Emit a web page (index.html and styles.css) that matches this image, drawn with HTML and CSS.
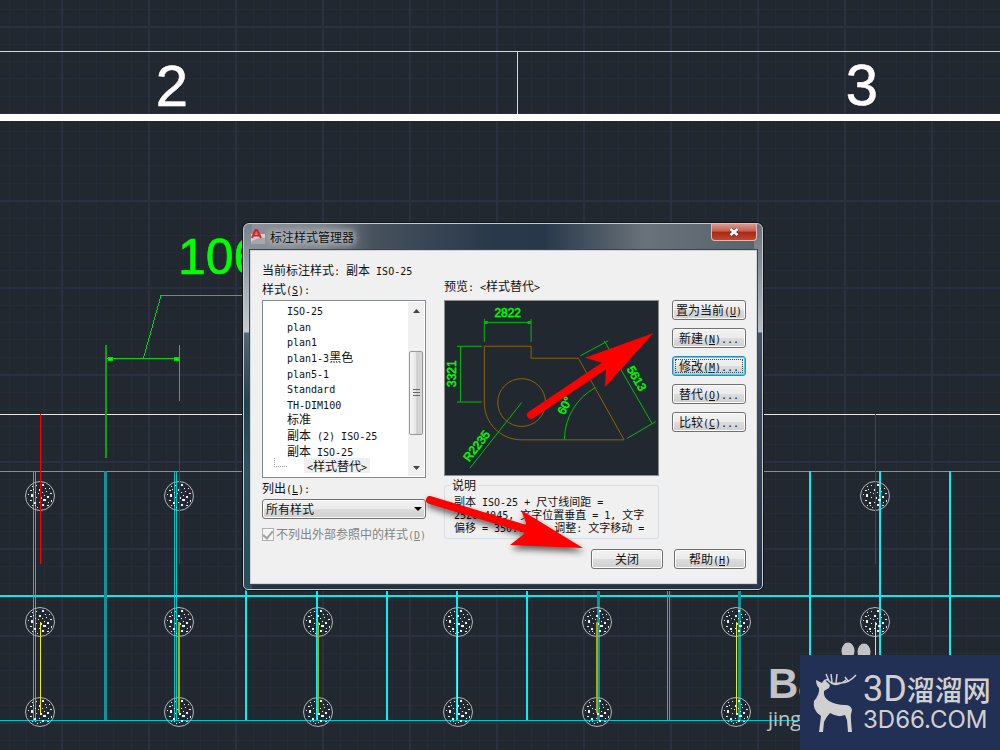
FILE: index.html
```html
<!DOCTYPE html>
<html lang="zh-CN">
<head>
<meta charset="utf-8">
<title>标注样式管理器</title>
<link rel="stylesheet" href="styles.css">
</head>
<body>
<main class="scene">
  <svg class="drawing" aria-hidden="true">
    <defs>
      <pattern id="grid" x="61" y="26" width="87" height="87" patternUnits="userSpaceOnUse">
        <path class="minor" d="M18 0V87M35 0V87M52 0V87M70 0V87M0 18H87M0 35H87M0 52H87M0 70H87"/>
        <path class="major" d="M0 1H87M1 0V87"/>
      </pattern>
      <g id="pile">
        <circle class="pile-edge" r="14.500"/>
        <path class="speck" d="M-10-6h2v1h-2zM-8-10h1v1h-1zM-4-11h1v1h-1zM2-12h2v2h-2zM5-8h1v1h-1zM9-8h1v1h-1zM-12-2h1v1h-1zM-9-2h2v3h-2zM-5-4h1v1h-1zM-1-7h2v2h-2zM2-4h1v1h-1zM6-5h1v1h-1zM10-3h2v1h-2zM-10 4h2v1h-2zM-6 6h2v2h-2zM-4 1h1v1h-1zM0 1h2v2h-2zM3 3h3v2h-3zM7 0h2v2h-2zM11 4h1v2h-1zM-1 6h1v1h-1zM2 8h2v2h-2zM7 9h2v1h-2zM-3 11h1v1h-1zM-8 9h1v1h-1zM-2-3h1v1h-1zM4-1h1v1h-1zM-7-7h1v1h-1zM8 6h1v1h-1zM-5 9h1v1h-1zM0 10h1v1h-1z"/>
      </g>
    </defs>
    <rect width="100%" height="100%" fill="url(#grid)"/>
    <g fill="#fff">
      <rect y="51" width="100%" height="1" fill="#d5d8dc"/>
      <rect x="517" y="52" width="1" height="62" fill="#d5d8dc"/>
      <rect y="114" width="100%" height="7"/>
      <rect y="414" width="100%" height="1" fill="#e8e8e8"/>
    </g>
    <text class="axis" x="172" y="106">2</text>
    <text class="axis" x="862" y="105">3</text>
    <g fill="#00c9cd">
      <rect y="471" width="100%" height="1"/>
      <rect y="720" width="100%" height="1"/>
    </g>
    <rect y="595" width="100%" height="2" fill="#00eef2"/>
    <path class="beam-pair" d="M33.500 471V720M35.500 471V720M174.500 471V720M176.500 471V720M667.500 590V720M669.500 590V720"/>
    <path class="beam-dull" d="M105 471V720M598 590V720M739 590V720"/>
    <path class="beam" d="M246 590V720M317 590V720M387 590V720M457 590V720M527 590V720M810 471V720M880 471V720M950 471V720"/>
    <g>
      <use href="#pile" x="40" y="496"/><use href="#pile" x="179" y="496"/><use href="#pile" x="875" y="496"/>
      <use href="#pile" x="40" y="622"/><use href="#pile" x="179" y="622"/><use href="#pile" x="318" y="622"/><use href="#pile" x="458" y="622"/><use href="#pile" x="597" y="622"/><use href="#pile" x="736" y="622"/><use href="#pile" x="875" y="622"/>
      <use href="#pile" x="40" y="712"/><use href="#pile" x="179" y="712"/><use href="#pile" x="318" y="712"/><use href="#pile" x="458" y="712"/><use href="#pile" x="597" y="712"/><use href="#pile" x="736" y="712"/>
    </g>
    <rect class="red" x="40" y="414" width="1" height="150"/>
    <rect class="red dim" x="179" y="415" width="1" height="149"/>
    <rect class="red dim" x="875" y="414" width="1" height="150"/>
    <g class="yellow">
      <rect x="40" y="622" width="1" height="91"/><rect x="457" y="622" width="1" height="91"/>
      <rect x="736" y="622" width="1" height="91"/><rect x="875" y="622" width="1" height="91"/>
    </g>
    <path class="yellow-dim" d="M179 622V713M318 622V713M597 622V713"/>
    <g class="leader">
      <path d="M244 295.500H161L143.500 358M106 358.500H179"/>
      <path class="leader-ext" d="M106 345V458"/>
      <path d="M179.500 345V401"/>
      <path d="M108 357h4v3h-4zM174 357h4v3h-4z" fill="#0f0"/>
    </g>
    <text class="length" x="178" y="274">106</text>
  </svg>

  <aside class="watermark">
    <svg viewBox="0 0 40 18" aria-hidden="true"><ellipse cx="10" cy="9" rx="6.500" ry="8.500"/><ellipse cx="26" cy="10" rx="6.500" ry="8.500"/></svg>
    <strong>Ba</strong>
    <span>jing</span>
  </aside>

  <section class="dialog" role="dialog" aria-labelledby="dialog-title">
    <header class="titlebar">
      <svg class="app-icon" viewBox="0 0 16 16" aria-hidden="true">
        <path d="M1 5h14v10H1z" fill="#d2d2d4"/><path d="M1 13q6-5 14-4v6H1z" fill="#a6a7ab"/>
        <path d="M2 9L5.500 1h1.500L11 9M4 6.500h5" fill="none" stroke="#e31b23" stroke-width="2"/>
      </svg>
      <h1 id="dialog-title">标注样式管理器</h1>
      <button class="close" type="button" aria-label="关闭窗口">
        <svg viewBox="0 0 12 10" aria-hidden="true"><path d="M2.500 2L9.500 8M9.500 2L2.500 8" stroke="#534444" stroke-width="4"/><path d="M2.500 2L9.500 8M9.500 2L2.500 8" stroke="#fff" stroke-width="2.500"/></svg>
      </button>
    </header>
    <form class="client">
      <p class="current">当前标注样式<span class="en">: </span>副本<span class="en"> ISO-25</span></p>
      <div class="columns">
        <div class="styles">
          <span class="caption" id="styles-label">样式<span class="en">(<u>S</u>):</span></span>
          <div class="listbox">
            <ul role="listbox" aria-labelledby="styles-label">
              <li role="option"><span class="en">ISO-25</span></li>
              <li role="option"><span class="en">plan</span></li>
              <li role="option"><span class="en">plan1</span></li>
              <li role="option"><span class="en">plan1-3</span>黑色</li>
              <li role="option"><span class="en">plan5-1</span></li>
              <li role="option"><span class="en">Standard</span></li>
              <li role="option"><span class="en">TH-DIM100</span></li>
              <li role="option">标准</li>
              <li role="option">副本<span class="en"> (2) ISO-25</span></li>
              <li role="option">副本<span class="en"> ISO-25</span></li>
              <li role="option" class="child" aria-selected="true"><span class="picked"><span class="en">&lt;</span>样式替代<span class="en">&gt;</span></span></li>
            </ul>
            <div class="scrollbar">
              <button type="button" aria-label="向上"><svg viewBox="0 0 7 4"><path d="M0 4L3.500 0 7 4z"/></svg></button>
              <div class="track"><div class="thumb"><i></i></div></div>
              <button type="button" aria-label="向下"><svg viewBox="0 0 7 4"><path d="M0 0L3.500 4 7 0z"/></svg></button>
            </div>
          </div>
          <label class="caption" for="filter">列出<span class="en">(<u>L</u>):</span></label>
          <div class="combo">
            <select id="filter"><option>所有样式</option></select>
            <svg viewBox="0 0 8 4" aria-hidden="true"><path d="M0 0h8L4 4z"/></svg>
          </div>
          <label class="check"><input type="checkbox" checked disabled><span>不列出外部参照中的样式<span class="en">(<u>D</u>)</span></span></label>
        </div>

        <div class="preview">
          <span class="caption">预览<span class="en">: &lt;</span>样式替代<span class="en">&gt;</span></span>
          <svg class="sample" viewBox="444 300 215 176" aria-label="标注预览">
            <g class="part">
              <path d="M484.500 346.500H531.500V358.500H579L625 440.500H522C501 440.500 484.500 424 484.500 403z"/>
              <circle cx="522" cy="403" r="24"/>
            </g>
            <g class="dims">
              <path d="M484.500 319V342M531.500 319V342M484.500 322.500H531.500M457 346.500H482M460.500 346.500V402.500M457 402.500H482M470 469L522 403M581 356L609 341M605 341L653 424M628 439L657 422M596 388A60 60 0 0 0 565 440"/>
              <path class="ticks" d="M485 321h3v3h-3zM528 321h3v3h-3z"/>
            </g>
            <g class="dim-text">
              <text x="508" y="317">2822</text>
              <text transform="translate(456 374) rotate(-90)">3321</text>
              <text transform="translate(480 449) rotate(-52)">R2235</text>
              <text transform="translate(634 381) rotate(60)">5613</text>
              <text transform="translate(569 408) rotate(-62)">60°</text>
            </g>
          </svg>
          <fieldset>
            <legend>说明</legend>
            <p>副本<span class="en"> ISO-25 + </span>尺寸线间距<span class="en"> =</span><br><span class="en">2520.4045, </span>文字位置垂直<span class="en"> = 1, </span>文字<br>偏移<span class="en"> = 350.0000, </span>调整<span class="en">: </span>文字移动<span class="en"> =</span></p>
          </fieldset>
        </div>

        <div class="actions">
          <button class="btn" type="button">置为当前<span class="en">(<u>U</u>)</span></button>
          <button class="btn" type="button">新建<span class="en">(<u>N</u>)...</span></button>
          <button class="btn focused" type="button">修改<span class="en">(<u>M</u>)...</span></button>
          <button class="btn" type="button">替代<span class="en">(<u>O</u>)...</span></button>
          <button class="btn" type="button">比较<span class="en">(<u>C</u>)...</span></button>
        </div>
      </div>
      <footer>
        <button class="btn" type="button">关闭</button>
        <button class="btn" type="button">帮助<span class="en">(<u>H</u>)</span></button>
      </footer>
    </form>
    <svg class="pointers" viewBox="243 223 520 367" aria-hidden="true">
      <path d="M531 415L604 366" stroke="#f00" stroke-width="8" stroke-linecap="round"/>
      <path d="M653.500 333L585 357.700L603 363L606 369L605 387z" fill="#f00"/>
      <g class="shadowed">
        <path d="M430 500L526 529" stroke="#f00" stroke-width="8" stroke-linecap="round"/>
        <path d="M583 548L521 510L526 523L524 534L510 545z" fill="#f00"/>
      </g>
    </svg>
  </section>

  <aside class="brand">
    <svg viewBox="0 0 46 60" aria-hidden="true">
      <path d="M4 7L10 10Q12 5 15 9L18 12L17 15L12 18Q11 24 17 28Q24 32 33 32Q39 32 40 37Q38 42 39 48L40 59H36L35 47L33 42Q26 45 18 40Q14 44 12 49L11 59H7L9 43Q0 37 2 28Q8 21 7 15Q4 12 4 7z"/>
      <path d="M12 10Q12 6 16 7Q20 12 27 10Q36 11 44 2M17 8L14 1M20 9L19 1M24 10L25 1M19 10Q25 14 34 7M36 8L33 4" fill="none" stroke="#d0d0d0" stroke-width="1.500"/>
    </svg>
    <div class="brand-text">
      <b><span>3D</span>溜溜网</b>
      <span>3D66.COM</span>
    </div>
  </aside>
</main>
</body>
</html>
```

FILE: styles.css
```css
* { box-sizing: border-box; }

body {
  margin: 0;
  background: #222830;
  color: #111;
  font: 12px/16px "Noto Sans CJK SC", sans-serif;
}

h1, p, ul { margin: 0; padding: 0; }
button, select, input { margin: 0; padding: 0; font: inherit; color: inherit; }

.en {
  font-family: "DejaVu Sans Mono", monospace;
  font-size: 10px;
  line-height: 0;
  white-space: pre-wrap;
}

/* Model space */
.scene { position: relative; min-height: 100vh; overflow: hidden; }
.drawing { position: absolute; inset: 0; width: 100%; height: 100%; shape-rendering: crispEdges; }
.minor { fill: none; stroke: #262c37; }
.major { fill: none; stroke: #2a303e; stroke-width: 2; }
.axis {
  fill: #fff;
  font: 58px "Liberation Sans", Arial, sans-serif;
  text-anchor: middle;
}
.length { fill: #0f0; font: 50px "Liberation Sans", Arial, sans-serif; }
.axis, .length { stroke-width: 0.6px; }
.axis { stroke: #fff; }
.length { stroke: #0f0; }
.beam { stroke: #00f2f7; stroke-width: 2; }
.beam-pair { fill: none; stroke: #00c3c8; }
.beam-dull { stroke: #129397; stroke-width: 3; }
.pile-edge { fill: none; stroke: #b4b7ba; shape-rendering: auto; }
.speck { fill: #f0f0f0; }
.red { fill: #f00; }
.red.dim { fill: #b81317; }
.yellow { fill: #f0f000; }
.yellow-dim { stroke: #a8aa10; stroke-width: 2; }
.leader { fill: none; stroke: #00d807; }
.leader-ext { stroke: #10a018; stroke-width: 2; }

/* Dialog window */
.dialog {
  position: absolute;
  left: 243px;
  top: 223px;
  width: 520px;
  padding: 0 5px 5px 6px;
  border: 1px solid #c3c9ce;
  border-radius: 6px 6px 5px 5px;
  box-shadow: 0 0 0 1px #10151a;
  background:
    linear-gradient(#77828c, #c8ccd0 108px, #536673 109px, #24414f 180px, #2b5563 240px, #2a4f5e) left / 8px 100% no-repeat,
    linear-gradient(#69737d, #b8bec4 108px, #445466 109px, #25364a) right / 8px 100% no-repeat,
    linear-gradient(90deg, #8d9398, #7b8288 80px, #46515c 130px, #29384a 250px, #28384a 300px, #697179 400px, #59636d) top / 100% 28px no-repeat,
    #24343f;
}
.titlebar { display: flex; align-items: center; height: 26px; gap: 4px; }
.app-icon { width: 16px; height: 16px; }
.titlebar h1 {
  flex: 1;
  font-size: 12px;
  line-height: 14px;
  font-weight: 400;
  text-shadow: 0 0 6px #c9cdd2, 0 0 8px #c9cdd2, 0 0 10px #b9bec4;
}
.close {
  align-self: flex-start;
  width: 46px;
  height: 17px;
  border: 1px solid #e0b7b0;
  border-top: 0;
  border-radius: 0 0 4px 4px;
  background: linear-gradient(#d99a8f, #c4604f 45%, #a92713 50%, #c5452d);
}
.close svg { display: block; width: 12px; height: 10px; margin: 0 auto; }

.client {
  padding: 11px 10px 14px 11px;
  border: 1px solid #cfd4d8;
  box-shadow: 0 0 0 1px #3d454c;
  background: #f0f0f0;
}
.columns { display: grid; grid-template-columns: 164px 1fr 74px; }
.caption { display: block; height: 20px; line-height: 20px; }
.styles { padding-top: 2px; }
.styles > .caption:first-child { line-height: 18px; }

.listbox {
  display: flex;
  height: 178px;
  padding: 1px;
  border: 1px solid #858a90;
  background: #fff;
}
.listbox ul {
  display: flex;
  flex: 1;
  flex-direction: column;
  padding-bottom: 2px;
  list-style: none;
}
.listbox li {
  flex: 1;
  min-height: 0;
  padding-left: 23px;
  line-height: 15px;
  white-space: nowrap;
}
.listbox .child { position: relative; padding-left: 40px; }
.child::before {
  content: "";
  position: absolute;
  left: 10px;
  top: 0;
  width: 12px;
  height: 8px;
  border: 1px dotted #999;
  border-width: 0 0 1px 1px;
}
.picked { display: inline-block; padding: 0 3px; background: #efefef; }
.scrollbar { display: flex; flex-direction: column; width: 16px; background: #f0f0f0; }
.scrollbar button { height: 17px; border: 0; background: none; }
.scrollbar button svg { display: block; width: 7px; height: 4px; margin: 0 auto; fill: #444; }
.track { flex: 1; padding: 32px 1px 0; }
.thumb {
  display: grid;
  place-items: center;
  height: 84px;
  border: 1px solid #979797;
  border-radius: 2px;
  background: linear-gradient(90deg, #f6f6f6, #e6e6e6 50%, #cfcfcf 55%, #d9d9d9);
}
.thumb i { width: 7px; height: 8px; background: repeating-linear-gradient(#666 0 1px, transparent 1px 3px); }

.combo { display: grid; align-items: center; margin-top: 1px; }
.combo > * { grid-area: 1 / 1; }
.combo select {
  appearance: none;
  width: 100%;
  height: 20px;
  padding-left: 3px;
  line-height: 16px;
}
.combo select, .btn {
  border: 1px solid #707070;
  border-radius: 3px;
  box-shadow: inset 0 0 0 1px #fbfbfb;
  background: linear-gradient(#f2f2f2, #ebebeb 50%, #dddddd 50%, #cfcfcf);
}
.combo svg { justify-self: end; width: 8px; height: 4px; margin-right: 4px; pointer-events: none; }
.check {
  display: flex;
  align-items: center;
  gap: 2px;
  margin-top: 7px;
  color: #838383;
  white-space: nowrap;
}
.check input {
  appearance: none;
  display: grid;
  place-items: center;
  width: 13px;
  height: 13px;
  border: 1px solid #b1b1b1;
  background: #f6f6f6;
}
.check input:checked::after {
  content: "";
  width: 4px;
  height: 8px;
  border: solid #a0a0a0;
  border-width: 0 2px 2px 0;
  rotate: 40deg;
}

.preview { padding: 0 13px 0 18px; }
.preview .caption { height: 22px; line-height: 16px; }
.sample {
  display: block;
  width: 100%;
  border: solid #fff;
  border-width: 0 1px 1px 0;
  outline: 1px solid #8c8c8c;
  outline-offset: -1px;
  background: #222830;
}
.part { fill: none; stroke: #8c6508; }
.dims { fill: none; stroke: #00bd08; }
.ticks { fill: #00bd08; stroke: none; }
.dim-text {
  fill: #0f0;
  stroke: #0f0;
  stroke-width: 0.5px;
  font: 12px "Liberation Sans", Arial, sans-serif;
  text-anchor: middle;
}
fieldset {
  min-width: 0;
  margin: 1px 0 0;
  padding: 2px 0 4px 9px;
  border: 1px solid #d5dfe5;
  border-radius: 3px;
  font-size: 11px;
  line-height: 13px;
  white-space: nowrap;
}
legend { margin-left: -4px; padding: 0 2px; font-size: 12px; line-height: 16px; }
fieldset .en { white-space: pre; }

.actions { display: flex; flex-direction: column; gap: 8px; padding-top: 22px; }
.btn {
  height: 20px;
  line-height: 16px;
  white-space: nowrap;
}
.focused {
  border-color: #2a8dbd;
  box-shadow: inset 0 0 0 1px #46cdf2;
  outline: 1px dotted #444;
  outline-offset: -4px;
}
footer { display: flex; justify-content: flex-end; gap: 11px; margin-top: 7px; }
footer .btn { width: 72px; }

.pointers { position: absolute; inset: -1px; width: 520px; height: 367px; overflow: visible; pointer-events: none; }
.shadowed { filter: drop-shadow(1px 4px 3px #0009); }

/* Corner marks */
.watermark {
  position: absolute;
  right: 122px;
  bottom: 20px;
  display: flex;
  flex-direction: column;
  width: 110px;
  color: #c2c3c6;
  font-family: "Liberation Sans", Arial, sans-serif;
}
.watermark svg { align-self: flex-end; width: 40px; height: 18px; fill: #c2c3c6; }
.watermark strong { font-size: 42px; line-height: 48px; }
.watermark span { font: 20px/22px "Open Sans", sans-serif; }
.brand {
  position: absolute;
  right: 0;
  bottom: 0;
  display: flex;
  align-items: center;
  gap: 5px;
  width: 200px;
  height: 95px;
  padding-left: 12px;
  background: #233055;
  color: #d0d0d0;
  fill: #d0d0d0;
}
.brand svg { flex: none; width: 46px; height: 60px; }
.brand-text { display: flex; flex-direction: column; font-family: Inter, sans-serif; white-space: nowrap; }
.brand-text b { display: flex; align-items: center; font: 500 28px/34px "Noto Sans CJK SC", sans-serif; }
.brand-text b span { font: 36px/34px Roboto, sans-serif; }
.brand-text > span { font-size: 24px; line-height: 28px; }
```
